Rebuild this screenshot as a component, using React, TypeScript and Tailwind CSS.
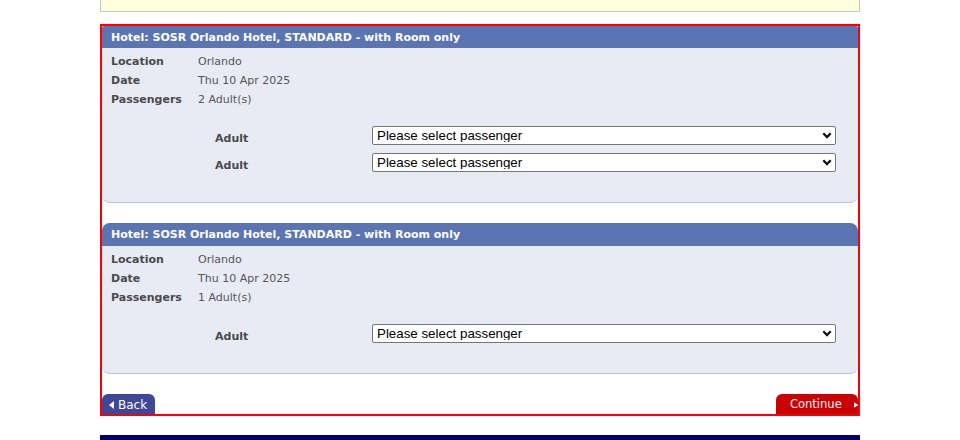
import React from 'react';

type Booking = {
  title: string;
  location: string;
  date: string;
  passengers: string;
  adults: number;
};

const bookings: Booking[] = [
  {
    title: 'Hotel: SOSR Orlando Hotel, STANDARD - with Room only',
    location: 'Orlando',
    date: 'Thu 10 Apr 2025',
    passengers: '2 Adult(s)',
    adults: 2,
  },
  {
    title: 'Hotel: SOSR Orlando Hotel, STANDARD - with Room only',
    location: 'Orlando',
    date: 'Thu 10 Apr 2025',
    passengers: '1 Adult(s)',
    adults: 1,
  },
];

function PassengerSelect() {
  return (
    <div className="relative w-[464px] h-[19px]">
      <select className="block appearance-none w-full h-[19px] bg-white border border-[#767676] rounded-[2px] pl-[4px] text-[13.33px] leading-none text-black font-['Liberation_Sans',Arial,sans-serif]">
        <option>Please select passenger</option>
      </select>
      <svg
        className="absolute right-[4px] top-[6px] pointer-events-none"
        width="10"
        height="7"
        viewBox="0 0 10 7"
      >
        <path d="M1.3 1.3 L5 5 L8.7 1.3" fill="none" stroke="#111" strokeWidth="2.3" />
      </svg>
    </div>
  );
}

function BookingPanel({ booking, first }: { booking: Booking; first?: boolean }) {
  return (
    <div
      className={
        'bg-[#e8ebf4] border-b border-[#b7c5df] rounded-b-[8px] ' +
        (first ? 'rounded-t-[2px]' : 'rounded-t-[8px]')
      }
    >
      <div
        className={
          'bg-[#5b74b3] text-white font-bold text-[11px] flex items-center pl-[9px] pt-[2px] ' +
          (first ? 'h-[22px] rounded-t-[2px]' : 'h-[23px] rounded-t-[8px]')
        }
      >
        {booking.title}
      </div>
      <div className="pt-[5px] pl-[9px] text-[11px] text-[#555]">
        <div className="flex h-[19px] items-center">
          <span className="w-[87px] font-bold text-[#4a4a4a]">Location</span>
          <span>{booking.location}</span>
        </div>
        <div className="flex h-[19px] items-center">
          <span className="w-[87px] font-bold text-[#4a4a4a]">Date</span>
          <span>{booking.date}</span>
        </div>
        <div className="flex h-[19px] items-center">
          <span className="w-[87px] font-bold text-[#4a4a4a]">Passengers</span>
          <span>{booking.passengers}</span>
        </div>
      </div>
      <div className="pt-[16px] pb-[30px] flex flex-col gap-[8px]">
        {Array.from({ length: booking.adults }).map((_, i) => (
          <div key={i} className="flex items-start h-[19px]">
            <span className="ml-[113px] w-[157px] pt-[6px] leading-[13px] font-bold text-[11px] text-[#4a4a4a]">
              Adult
            </span>
            <PassengerSelect />
          </div>
        ))}
      </div>
    </div>
  );
}

export default function App() {
  return (
    <div className="w-[960px] h-[440px] overflow-hidden bg-white font-['DejaVu_Sans',Verdana,sans-serif]">
      <div className="mx-[100px] w-[760px]">
        <div className="h-[12px] bg-[#ffffdc] border-x border-b border-[#c8c8c8]" />

        <div className="mt-[12px] border-2 border-[#ff0000] h-[392px] flex flex-col">
          <BookingPanel booking={bookings[0]} first />
          <div className="mt-[20px]">
            <BookingPanel booking={bookings[1]} />
          </div>
          <div className="mt-auto flex justify-between items-end">
            <button className="h-[20px] w-[53px] bg-[#3f4798] rounded-t-[6px] text-white text-[12px] flex items-center gap-[3px] pl-[7px] pt-[2px]">
              <svg width="6" height="8" viewBox="0 0 6 8">
                <path d="M5 0 L0 4 L5 8 Z" fill="#fff" />
              </svg>
              Back
            </button>
            <button className="h-[20px] w-[82px] bg-[#cc0000] rounded-t-[6px] text-white text-[11.5px] flex items-center pl-[14px] pt-[1px]">
              <span>Continue</span>
              <svg className="ml-[12px]" width="6" height="8" viewBox="0 0 6 8">
                <path d="M0 0 L6 4 L0 8 Z" fill="#fff" />
              </svg>
            </button>
          </div>
        </div>

        <div className="mt-[19px] h-[6px] bg-[#000066]" />
      </div>
    </div>
  );
}
